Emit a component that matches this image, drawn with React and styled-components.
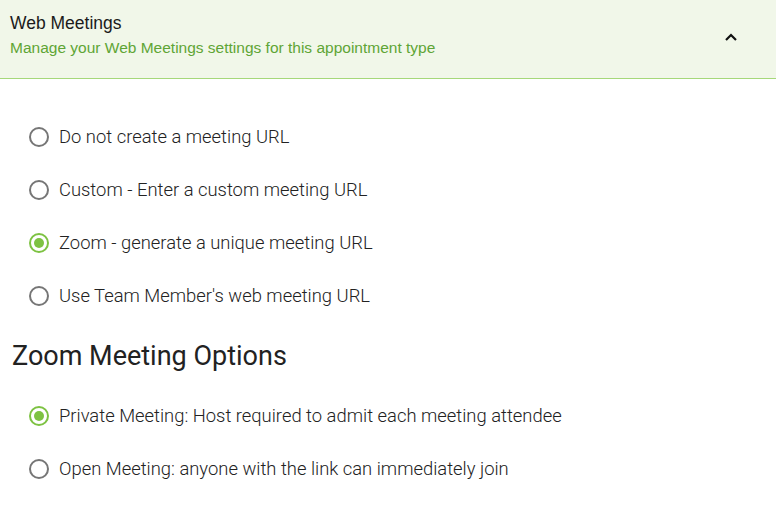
import React, { useState } from "react";
import styled, { createGlobalStyle } from "styled-components";

const Global = createGlobalStyle`
  html, body { margin: 0; padding: 0; background: #ffffff; }
  body { font-family: Roboto, "Liberation Sans", Arial, sans-serif; }
  * { box-sizing: border-box; }
`;

const Page = styled.div`
  width: 776px;
  height: 521px;
  background: #fff;
  overflow: hidden;
`;

const Header = styled.div`
  height: 79px;
  background: #f1f7e9;
  border-bottom: 1px solid #a6d87a;
  display: flex;
  align-items: center;
  justify-content: space-between;
  padding: 0 38px 0 10px;
`;

const HeaderText = styled.div`
  display: flex;
  flex-direction: column;
  gap: 6px;
  margin-top: -8px;
`;

const Title = styled.div`
  font-family: "Liberation Sans", Arial, sans-serif;
  font-size: 17.5px;
  line-height: 20px;
  color: #1b1b1b;
`;

const Subtitle = styled.div`
  font-family: "Liberation Sans", Arial, sans-serif;
  font-size: 15.5px;
  line-height: 18px;
  color: #5fa535;
`;

const Chevron = styled.svg`
  width: 14px;
  height: 10px;
  margin-top: -4px;
`;

const Body = styled.div`
  padding-top: 31px;
`;

const Group = styled.div`
  display: flex;
  flex-direction: column;
  padding-left: 29px;
`;

const Row = styled.label`
  height: 53px;
  display: flex;
  align-items: center;
  gap: 10px;
  cursor: pointer;
`;

const Circle = styled.span`
  width: 20px;
  height: 20px;
  border-radius: 50%;
  border: 2px solid ${(p) => (p.$on ? "#7dc242" : "#767676")};
  display: flex;
  align-items: center;
  justify-content: center;
  flex-shrink: 0;
  &::after {
    content: "";
    width: 10px;
    height: 10px;
    border-radius: 50%;
    background: ${(p) => (p.$on ? "#7dc242" : "transparent")};
  }
`;

const Label = styled.span`
  font-family: Roboto, "Liberation Sans", sans-serif;
  font-weight: 300;
  font-size: 18.4px;
  color: #222;
`;

const Heading = styled.h2`
  margin: 18px 0 17px 0;
  padding-left: 12px;
  font-family: Roboto, "Liberation Sans", sans-serif;
  font-weight: 400;
  font-size: 27px;
  line-height: 32px;
  color: #222;
`;

function RadioGroup({ options, value, onChange }) {
  return (
    <Group>
      {options.map((o) => (
        <Row key={o} onClick={() => onChange(o)}>
          <Circle $on={value === o} />
          <Label>{o}</Label>
        </Row>
      ))}
    </Group>
  );
}

const urlOptions = [
  "Do not create a meeting URL",
  "Custom - Enter a custom meeting URL",
  "Zoom - generate a unique meeting URL",
  "Use Team Member's web meeting URL",
];

const zoomOptions = [
  "Private Meeting: Host required to admit each meeting attendee",
  "Open Meeting: anyone with the link can immediately join",
];

export default function App() {
  const [url, setUrl] = useState(urlOptions[2]);
  const [zoom, setZoom] = useState(zoomOptions[0]);
  return (
    <Page>
      <Global />
      <Header>
        <HeaderText>
          <Title>Web Meetings</Title>
          <Subtitle>Manage your Web Meetings settings for this appointment type</Subtitle>
        </HeaderText>
        <Chevron viewBox="0 0 14 10">
          <polyline points="2,8 7,3 12,8" fill="none" stroke="#111" strokeWidth="2.2" />
        </Chevron>
      </Header>
      <Body>
        <RadioGroup options={urlOptions} value={url} onChange={setUrl} />
        <Heading>Zoom Meeting Options</Heading>
        <RadioGroup options={zoomOptions} value={zoom} onChange={setZoom} />
      </Body>
    </Page>
  );
}
